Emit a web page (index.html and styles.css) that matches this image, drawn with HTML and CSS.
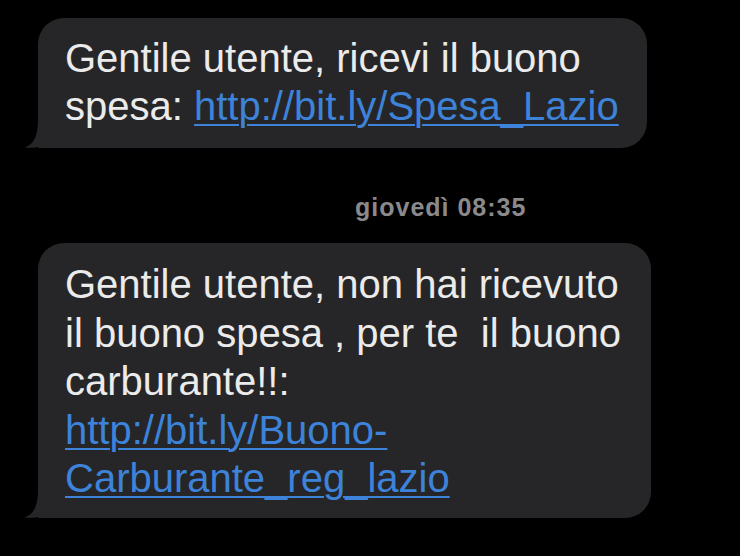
FILE: index.html
```html
<!DOCTYPE html>
<html lang="it">
<head>
  <meta charset="UTF-8" />
  <title>Messaggi</title>
  <link rel="stylesheet" href="styles.css">
</head>
<body>

<div id="thread">
  <div class="bubble first">
    Gentile utente, ricevi il buono<br>
    spesa: <a href="#">http://bit.ly/Spesa_Lazio</a>
    <svg class="tail" viewBox="0 0 20 30" width="20" height="30">
      <path d="M14 2 C14 19 9 27 0.5 29.4 C7 30.4 13 29.8 20 27 L20 30 L14 30 Z" />
    </svg>
  </div>

  <div class="stamp">giovedì 08:35</div>

  <div class="bubble second">
    Gentile utente, non hai ricevuto<br>
    il buono spesa , per te&nbsp; il buono<br>
    carburante!!:<br>
    <a href="#">http://bit.ly/Buono-<br>Carburante_reg_lazio</a>
    <svg class="tail" viewBox="0 0 20 30" width="20" height="30">
      <path d="M14 2 C14 19 9 27 0.5 29.4 C7 30.4 13 29.8 20 27 L20 30 L14 30 Z" />
    </svg>
  </div>
</div>

</body>
</html>
```

FILE: styles.css
```css
body {
  margin: 0;
  background: #000;
  font-family: "Liberation Sans", Arial, sans-serif;
  color: #ebebeb;
}
#thread {
  display: flex;
  flex-direction: column;
  align-items: flex-start;
  padding: 18px 0 0 38px;
}
.bubble {
  position: relative;
  background: #262628;
  border-radius: 26px;
  border-bottom-left-radius: 0;
  font-size: 40px;
  line-height: 48px;
  padding: 16px 28px 18px 27px;
}
.bubble a {
  color: #3d83da;
  text-decoration: underline;
  text-decoration-thickness: 2px;
  text-underline-offset: 4px;
}
.second {
  line-height: 48.5px;
  padding: 17px 30px 15px 27px;
}
.tail {
  position: absolute;
  left: -14px;
  bottom: 0;
  fill: #262628;
}
.stamp {
  margin: 44px 0 21px 317px;
  font-size: 25px;
  line-height: 30px;
  font-weight: bold;
  letter-spacing: 1px;
  color: #8a8a8c;
}
```
